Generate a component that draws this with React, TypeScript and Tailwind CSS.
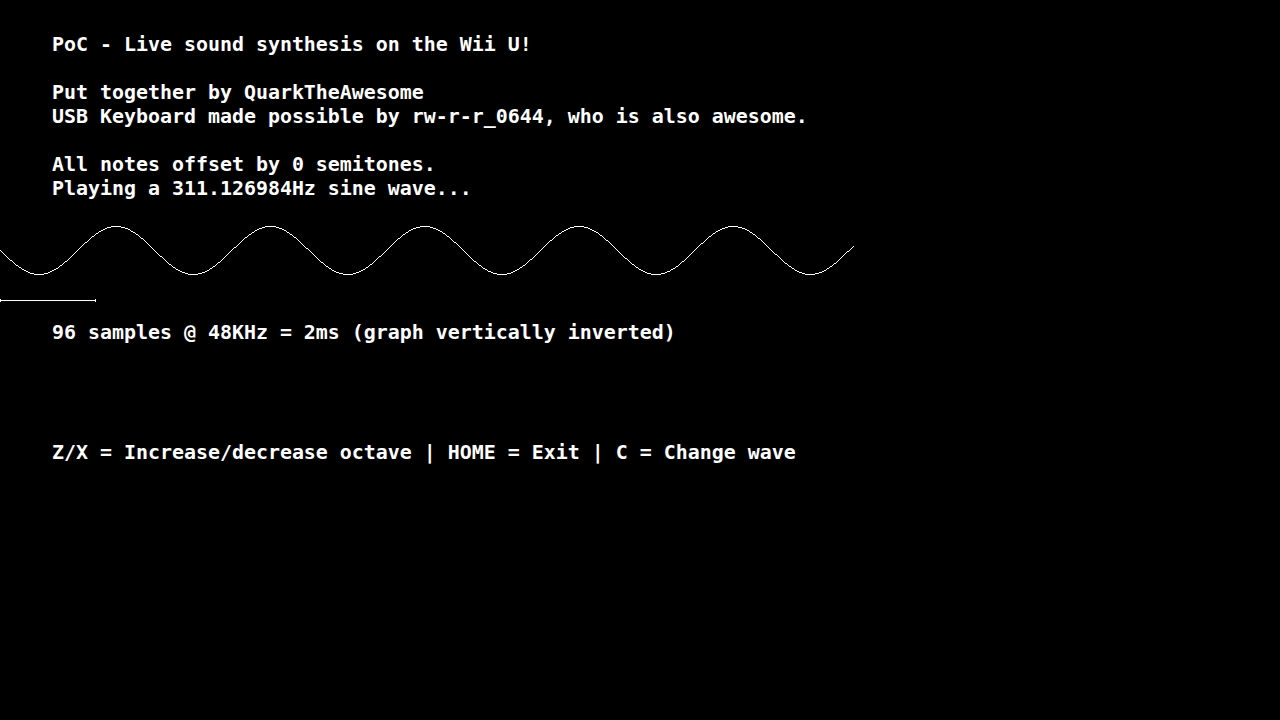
import React from "react";

const PERIOD = 48000 / 311.126984;

function Wave() {
  const pts: string[] = [];
  for (let x = 0; x <= 853; x++) {
    const y = Math.round(50 + 24 * Math.sin((2 * Math.PI * x) / PERIOD));
    pts.push(`${x + 0.5},${y + 0.5}`);
  }
  return (
    <svg width="860" height="120" viewBox="0 0 860 120" className="block" shapeRendering="crispEdges">
      <polyline points={pts.join(" ")} fill="none" stroke="#ffffff" strokeWidth="1" />
      <line x1="0" y1="100.5" x2="96" y2="100.5" stroke="#ffffff" strokeWidth="1" />
      <line x1="0.5" y1="99" x2="0.5" y2="102" stroke="#ffffff" strokeWidth="1" />
      <line x1="95.5" y1="99" x2="95.5" y2="102" stroke="#ffffff" strokeWidth="1" />
    </svg>
  );
}

function Line({ children }: { children?: React.ReactNode }) {
  return <div className="h-[24px] leading-[26px] pl-[52px] whitespace-pre">{children}</div>;
}

export default function App() {
  return (
    <div
      className="w-[1280px] h-[720px] bg-black text-white font-bold text-[19.93px] overflow-hidden pt-[32px]"
      style={{ fontFamily: '"DejaVu Sans Mono", monospace' }}
    >
      <Line>PoC - Live sound synthesis on the Wii U!</Line>
      <Line />
      <Line>Put together by QuarkTheAwesome</Line>
      <Line>USB Keyboard made possible by rw-r-r_0644, who is also awesome.</Line>
      <Line />
      <Line>All notes offset by 0 semitones.</Line>
      <Line>Playing a 311.126984Hz sine wave...</Line>
      <Wave />
      <Line>96 samples @ 48KHz = 2ms (graph vertically inverted)</Line>
      <Line />
      <Line />
      <Line />
      <Line />
      <Line>Z/X = Increase/decrease octave | HOME = Exit | C = Change wave</Line>
    </div>
  );
}
